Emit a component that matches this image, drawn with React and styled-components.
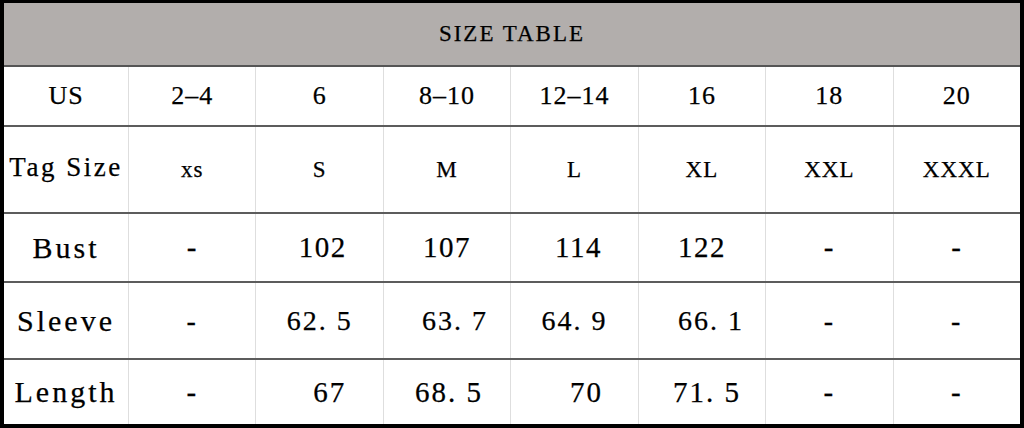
import styled, { createGlobalStyle } from "styled-components"

const GlobalStyle = createGlobalStyle`
    html, body {
        margin: 0;
        padding: 0;
        background: #fff;
    }
    body {
        font-family: "Liberation Serif", "Noto Sans CJK SC", serif;
        color: #000;
    }
`

const rows = [
    {
        height: 58, size: 26, spacing: 1,
        cells: ["US", "2–4", "6", "8–10", "12–14", "16", "18", "20"],
        shifts: [0, 0, 0, 0, 0, 0, 0, 0],
    },
    {
        height: 85, size: 23, spacing: 1, labelSize: 27, labelSpacing: 2.5, labelLift: 4,
        cells: ["Tag Size", "xs", "S", "M", "L", "XL", "XXL", "XXXL"],
    },
    {
        height: 67, size: 29, spacing: 1.5, labelSize: 30, labelSpacing: 3,
        cells: ["Bust", "-", "102", "107", "114", "122", "-", "-"],
        shifts: [0, 0, 6, 0, 8, 0, 0, 0],
    },
    {
        height: 75, size: 28, spacing: 2, labelSize: 30, labelSpacing: 3,
        cells: ["Sleeve", "-", "62. 5", "63. 7", "64. 9", "66. 1", "-", "-"],
        shifts: [0, 0, 0, 16, 0, 18, 0, 0],
    },
    {
        height: 64, size: 29, spacing: 2, labelSize: 30, labelSpacing: 3,
        cells: ["Length", "-", "67", "68. 5", "70", "71. 5", "-", "-"],
        shifts: [0, 0, 20, 4, 24, 10, 0, 0],
    },
]

const App = () => {
    return (
        <>
            <GlobalStyle />
            <Frame>
                <Header>SIZE TABLE</Header>
                {rows.map((row, i) => (
                    <Row key={i} $height={row.height} $last={i === rows.length - 1}>
                        {row.cells.map((text, j) => {
                            const isLabel = j === 0 && row.labelSize
                            return (
                                <Cell
                                    key={j}
                                    $size={isLabel ? row.labelSize : row.size}
                                    $spacing={isLabel ? row.labelSpacing : row.spacing}
                                    $lift={isLabel ? row.labelLift || 0 : 0}
                                    $shift={row.shifts ? row.shifts[j] : 0}
                                >
                                    {text}
                                </Cell>
                            )
                        })}
                    </Row>
                ))}
            </Frame>
        </>
    )
}

const Frame = styled.div`
    box-sizing: border-box;
    width: 1024px;
    height: 428px;
    border: 4px solid #000;
    border-top-width: 3px;
    display: flex;
    flex-direction: column;
    background: #fff;
`

const Header = styled.div`
    height: 62px;
    flex-shrink: 0;
    background: #b2aeac;
    border-bottom: 2px solid #555;
    display: flex;
    align-items: center;
    justify-content: center;
    font-size: 23px;
    letter-spacing: 2px;
    color: #000;
    -webkit-text-stroke: 0.25px #000;
`

const Row = styled.div`
    height: ${p => p.$height}px;
    flex-shrink: 0;
    display: grid;
    grid-template-columns: 124px repeat(7, 1fr);
    border-bottom: ${p => p.$last ? "none" : "2px solid #5c5c5c"};
`

const Cell = styled.div`
    display: flex;
    align-items: center;
    justify-content: center;
    border-left: 1px solid #dedede;
    font-size: ${p => p.$size}px;
    letter-spacing: ${p => p.$spacing}px;
    padding-left: ${p => p.$shift}px;
    padding-bottom: ${p => p.$lift}px;
    white-space: pre;
    -webkit-text-stroke: 0.25px #000;
    &:first-child {
        border-left: none;
    }
`

export default App
